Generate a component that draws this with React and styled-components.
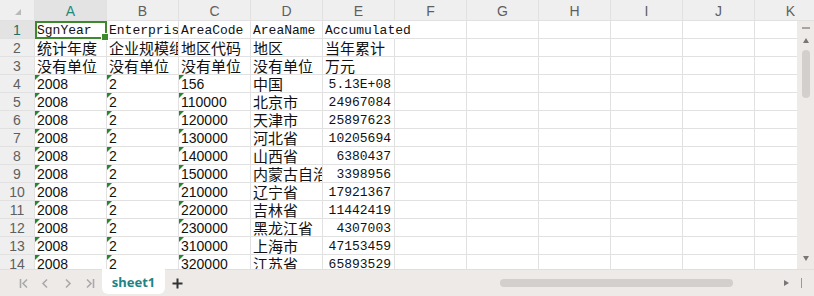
import React from "react";
import styled, { createGlobalStyle, css } from "styled-components";

const GlobalStyle = createGlobalStyle`
  html, body {
    margin: 0;
    padding: 0;
    background: #ffffff;
  }
  * {
    box-sizing: border-box;
  }
`;

const LINE = "#e1e1e1";
const HEAD_BG = "#efefef";
const BAR_BG = "#eeeae8";
const SANS = `"Liberation Sans", Arial, sans-serif`;
const MONO = `"Liberation Mono", "Noto Sans CJK SC", monospace`;
const CJK = `"Noto Sans CJK SC", "Liberation Sans", sans-serif`;

const Frame = styled.div`
  width: 814px;
  height: 296px;
  display: flex;
  flex-direction: column;
  overflow: hidden;
  background: #fff;
`;

const HeaderRow = styled.div`
  display: flex;
  height: 21px;
  flex: none;
  background: ${HEAD_BG};
  border-bottom: 1px solid ${LINE};
`;

const Corner = styled.div`
  width: 35px;
  flex: none;
  position: relative;
  border-right: 1px solid ${LINE};
  &::after {
    content: "";
    position: absolute;
    left: 15px;
    top: 9px;
    width: 0;
    height: 0;
    border-bottom: 6px solid #b9b9b9;
    border-left: 6px solid transparent;
  }
`;

const ColHead = styled.div`
  width: 72px;
  flex: none;
  display: flex;
  align-items: center;
  justify-content: center;
  font-family: ${SANS};
  font-size: 14px;
  color: ${(p) => (p.$active ? "#1f8a7c" : "#5f5f5f")};
  background: ${(p) => (p.$active ? "#e3e3e3" : "transparent")};
  border-right: 1px solid ${LINE};
  padding-top: 1px;
`;

const Body = styled.div`
  display: flex;
  height: 248px;
  flex: none;
`;

const Grid = styled.div`
  width: 797px;
  overflow: hidden;
  display: flex;
  flex-direction: column;
`;

const Row = styled.div`
  display: flex;
  height: 18px;
  flex: none;
`;

const RowHead = styled.div`
  width: 35px;
  flex: none;
  height: 18px;
  background: ${(p) => (p.$active ? "#e3e3e3" : HEAD_BG)};
  color: ${(p) => (p.$active ? "#1f6f66" : "#5f5f5f")};
  border-right: 1px solid ${LINE};
  border-bottom: 1px solid ${LINE};
  font-family: ${SANS};
  font-size: 14px;
  line-height: 18px;
  text-align: center;
`;

const fonts = {
  mono: css`
    font-family: ${MONO};
    font-size: 13px;
    line-height: 19px;
  `,
  sans: css`
    font-family: ${SANS};
    font-size: 14px;
    line-height: 18px;
  `,
  cjk: css`
    font-family: ${CJK};
    font-size: 15px;
    line-height: 17px;
  `,
};

const Cell = styled.div`
  position: relative;
  width: 72px;
  height: 18px;
  flex: none;
  padding: 0 3px 0 2px;
  border-right: 1px solid ${(p) => (p.$spill ? "transparent" : LINE)};
  border-bottom: 1px solid ${LINE};
  color: #111;
  white-space: nowrap;
  overflow: ${(p) => (p.$spill || p.$selected ? "visible" : "hidden")};
  text-align: ${(p) => (p.$right ? "right" : "left")};
  z-index: ${(p) => (p.$selected ? 2 : p.$spill ? 1 : 0)};
  ${(p) => fonts[p.$font || "mono"]}

  ${(p) =>
    p.$flag &&
    css`
      &::before {
        content: "";
        position: absolute;
        left: 0;
        top: 0;
        width: 0;
        height: 0;
        border-top: 5px solid #1e8a2a;
        border-right: 5px solid transparent;
      }
    `}
`;

const Selection = styled.div`
  position: absolute;
  left: 0;
  top: 0;
  right: -1px;
  bottom: -1px;
  border: 2px solid #3d8a2c;
  pointer-events: none;
  &::after {
    content: "";
    position: absolute;
    right: -4px;
    bottom: -4px;
    width: 6px;
    height: 6px;
    background: #3d8a2c;
    border: 1px solid #fff;
  }
`;

const VScroll = styled.div`
  width: 17px;
  flex: none;
  background: ${BAR_BG};
  display: flex;
  flex-direction: column;
  align-items: center;
  padding-top: 6px;
`;

const Dash = styled.div`
  width: 8px;
  height: 2px;
  background: #a5a5a5;
`;

const Thumb = styled.div`
  width: 8px;
  height: 48px;
  border-radius: 4px;
  background: #d3cfcd;
  margin-top: 6px;
`;

const Spacer = styled.div`
  flex: 1;
`;

const Tri = ({ dir, style }) => {
  const d = {
    up: "M0 5 L3 0 L6 5 Z",
    down: "M0 0 L6 0 L3 5 Z",
    right: "M0 0 L5 3 L0 6 Z",
  }[dir];
  return (
    <svg width="6" height="6" viewBox="0 0 6 6" style={style}>
      <path d={d} fill="#777" />
    </svg>
  );
};

const BottomBar = styled.div`
  height: 27px;
  flex: none;
  background: ${BAR_BG};
  border-top: 1px solid #e2dedc;
  display: flex;
  align-items: flex-start;
`;

const Nav = styled.div`
  display: flex;
  align-items: center;
  height: 26px;
  padding-left: 13px;
  width: 102px;
  flex: none;
`;

const NavBtn = styled.div`
  width: 22px;
  height: 26px;
  display: flex;
  align-items: center;
  justify-content: center;
`;

const Tab = styled.div`
  width: 63px;
  height: 25px;
  margin-top: -1px;
  background: #fff;
  border-radius: 0 0 6px 6px;
  display: flex;
  align-items: center;
  justify-content: center;
  font-family: "Noto Sans", ${SANS};
  font-weight: 700;
  font-size: 13px;
  color: #1d8486;
`;

const AddTab = styled.div`
  width: 24px;
  height: 26px;
  display: flex;
  align-items: center;
  justify-content: center;
`;

const HScroll = styled.div`
  flex: 1;
  height: 26px;
  display: flex;
  align-items: center;
  padding-left: 311px;
`;

const HThumb = styled.div`
  width: 233px;
  height: 8px;
  border-radius: 4px;
  background: #d3cfcd;
`;

const HEnd = styled.div`
  width: 44px;
  height: 26px;
  flex: none;
  display: flex;
  align-items: center;
  padding-left: 14px;
  gap: 11px;
`;

const Bar = styled.div`
  width: 1px;
  height: 10px;
  background: #999;
`;

const NavIcon = ({ kind }) => {
  const paths = {
    first: (
      <>
        <path d="M1.5 1 V10" />
        <path d="M8 1.5 L4 5.5 L8 9.5" />
      </>
    ),
    prev: <path d="M6 1.5 L2 5.5 L6 9.5" />,
    next: <path d="M3 1.5 L7 5.5 L3 9.5" />,
    last: (
      <>
        <path d="M2 1.5 L6 5.5 L2 9.5" />
        <path d="M8.5 1 V10" />
      </>
    ),
  };
  return (
    <svg width="10" height="11" viewBox="0 0 10 11" fill="none" stroke="#a9a9a9" strokeWidth="1.6">
      {paths[kind]}
    </svg>
  );
};

const cols = ["A", "B", "C", "D", "E", "F", "G", "H", "I", "J", "K"];

const data = [
  ["2008", "2", "156", "中国", "5.13E+08"],
  ["2008", "2", "110000", "北京市", "24967084"],
  ["2008", "2", "120000", "天津市", "25897623"],
  ["2008", "2", "130000", "河北省", "10205694"],
  ["2008", "2", "140000", "山西省", "6380437"],
  ["2008", "2", "150000", "内蒙古自治区", "3398956"],
  ["2008", "2", "210000", "辽宁省", "17921367"],
  ["2008", "2", "220000", "吉林省", "11442419"],
  ["2008", "2", "230000", "黑龙江省", "4307003"],
  ["2008", "2", "310000", "上海市", "47153459"],
  ["2008", "2", "320000", "江苏省", "65893529"],
];

const Empty = ({ n }) =>
  Array.from({ length: n }, (_, i) => <Cell key={`e${i}`} />);

export default function App() {
  return (
    <>
      <GlobalStyle />
      <Frame>
        <HeaderRow>
          <Corner />
          {cols.map((c) => (
            <ColHead key={c} $active={c === "A"}>
              {c}
            </ColHead>
          ))}
        </HeaderRow>
        <Body>
          <Grid>
            <Row>
              <RowHead $active>1</RowHead>
              <Cell $selected>
                SgnYear
                <Selection />
              </Cell>
              <Cell>Enterprise</Cell>
              <Cell>AreaCode</Cell>
              <Cell>AreaName</Cell>
              <Cell $spill>Accumulated</Cell>
              <Empty n={6} />
            </Row>
            <Row>
              <RowHead>2</RowHead>
              {["统计年度", "企业规模组别", "地区代码", "地区", "当年累计"].map((t) => (
                <Cell key={t} $font="cjk">
                  {t}
                </Cell>
              ))}
              <Empty n={6} />
            </Row>
            <Row>
              <RowHead>3</RowHead>
              {["没有单位", "没有单位", "没有单位", "没有单位", "万元"].map((t, i) => (
                <Cell key={i} $font="cjk">
                  {t}
                </Cell>
              ))}
              <Empty n={6} />
            </Row>
            {data.map((r, i) => (
              <Row key={i}>
                <RowHead>{i + 4}</RowHead>
                <Cell $font="sans" $flag>
                  {r[0]}
                </Cell>
                <Cell $font="sans" $flag>
                  {r[1]}
                </Cell>
                <Cell $font="sans" $flag>
                  {r[2]}
                </Cell>
                <Cell $font="cjk">{r[3]}</Cell>
                <Cell $right>{r[4]}</Cell>
                <Empty n={6} />
              </Row>
            ))}
          </Grid>
          <VScroll>
            <Dash />
            <Tri dir="up" style={{ marginTop: 9 }} />
            <Thumb />
            <Spacer />
            <Tri dir="down" style={{ marginBottom: 7 }} />
          </VScroll>
        </Body>
        <BottomBar>
          <Nav>
            <NavBtn>
              <NavIcon kind="first" />
            </NavBtn>
            <NavBtn>
              <NavIcon kind="prev" />
            </NavBtn>
            <NavBtn>
              <NavIcon kind="next" />
            </NavBtn>
            <NavBtn>
              <NavIcon kind="last" />
            </NavBtn>
          </Nav>
          <Tab>sheet1</Tab>
          <AddTab>
            <svg width="11" height="11" viewBox="0 0 11 11" stroke="#333" strokeWidth="2">
              <path d="M5.5 0.5 V10.5 M0.5 5.5 H10.5" />
            </svg>
          </AddTab>
          <HScroll>
            <HThumb />
          </HScroll>
          <HEnd>
            <Tri dir="right" />
            <Bar />
          </HEnd>
        </BottomBar>
      </Frame>
    </>
  );
}
